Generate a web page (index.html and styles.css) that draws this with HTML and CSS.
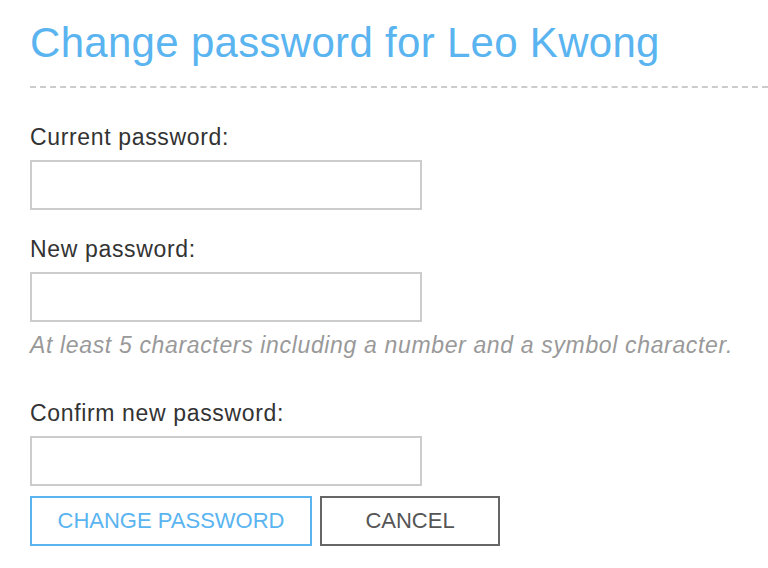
FILE: index.html
```html
<!DOCTYPE html>
<html>
<head>
<meta charset="utf-8">
<title>Change password</title>
<link rel="stylesheet" href="styles.css">
</head>
<body>
<div class="page">
  <h1 class="title">Change password for Leo Kwong</h1>
  <form class="form">
    <label class="label label-first" for="cur">Current password:</label>
    <input class="field" id="cur" type="password">
    <label class="label" for="new">New password:</label>
    <input class="field" id="new" type="password">
    <p class="hint">At least 5 characters including a number and a symbol character.</p>
    <label class="label label-confirm" for="conf">Confirm new password:</label>
    <input class="field" id="conf" type="password">
    <div class="actions">
      <button type="button" class="btn btn-primary">CHANGE PASSWORD</button>
      <button type="button" class="btn btn-cancel">CANCEL</button>
    </div>
  </form>
</div>
</body>
</html>
```
FILE: styles.css
```css
html, body {
  margin: 0;
  padding: 0;
  background: #fff;
}
body {
  font-family: "Liberation Sans", Arial, sans-serif;
  color: #333;
}
.page {
  padding: 18px 0 0 30px;
}
.title {
  margin: 0;
  font-size: 42px;
  line-height: 50px;
  font-weight: normal;
  letter-spacing: 0.3px;
  color: #5ab4f0;
  padding-bottom: 18px;
  border-bottom: 2px dashed #ccc;
}
.form {
  display: flex;
  flex-direction: column;
  align-items: flex-start;
}
.label {
  display: block;
  font-size: 23px;
  line-height: 26px;
  letter-spacing: 0.65px;
  margin-top: 26px;
  margin-bottom: 10px;
  color: #333;
}
.label-first {
  margin-top: 36px;
}
.label-confirm {
  margin-top: 42px;
}
.field {
  box-sizing: border-box;
  width: 392px;
  height: 50px;
  border: 2px solid #ccc;
  margin: 0;
  padding: 0 10px;
  font-size: 20px;
  background: #fff;
  outline: none;
}
.hint {
  margin: 10px 0 0;
  font-size: 23px;
  line-height: 26px;
  letter-spacing: 0.65px;
  font-style: italic;
  color: #999;
}
.actions {
  display: flex;
  gap: 8px;
  margin-top: 10px;
}
.btn {
  box-sizing: border-box;
  height: 50px;
  background: #fff;
  font-family: "Liberation Sans", Arial, sans-serif;
  font-size: 22px;
  padding: 0;
  cursor: pointer;
}
.btn-primary {
  width: 282px;
  border: 2px solid #5ab4f0;
  color: #5ab4f0;
}
.btn-cancel {
  width: 180px;
  border: 2px solid #666;
  color: #555;
}
```
